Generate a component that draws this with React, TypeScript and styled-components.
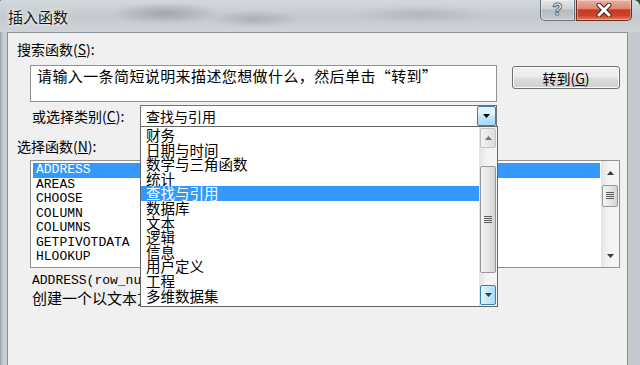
import React from "react";
import styled, { createGlobalStyle } from "styled-components";

const Global = createGlobalStyle`
  html, body { margin: 0; padding: 0; background: #24503c; }
  body {
    width: 640px; height: 365px; overflow: hidden;
    font-family: "Noto Sans CJK SC", "Liberation Sans", sans-serif;
    color: #000;
  }
  #root { width: 640px; height: 365px; }
`;

const Window = styled.div`
  width: 640px;
  height: 365px;
  display: flex;
  flex-direction: column;
  border-top-right-radius: 7px;
  border-top-left-radius: 2px;
  overflow: hidden;
  background: linear-gradient(90deg, #9aa1a7 0px, #c7cdd2 3px, #c3c9ce 100%);
`;

const TitleBar = styled.div`
  height: 32px;
  display: flex;
  align-items: flex-start;
  padding: 0 8px 0 8px;
  background:
    radial-gradient(ellipse 55px 11px at 165px 13px, rgba(80, 86, 92, 0.32), transparent),
    radial-gradient(ellipse 45px 9px at 255px 19px, rgba(80, 86, 92, 0.22), transparent),
    radial-gradient(ellipse 70px 9px at 420px 14px, rgba(80, 86, 92, 0.18), transparent),
    linear-gradient(180deg, #d3d8dc 0%, #c3c9ce 55%, #d0d4d8 100%);
`;

const Title = styled.div`
  margin-top: 8px;
  font-size: 15px;
  line-height: 18px;
  color: #111;
  text-shadow: 0 0 6px rgba(255, 255, 255, 0.9), 0 0 3px rgba(255, 255, 255, 0.9);
`;

const CaptionButtons = styled.div`
  margin-left: auto;
  display: flex;
  gap: 1px;
`;

const CaptionButton = styled.div<{ $kind: "help" | "close" }>`
  height: 21px;
  width: ${(p) => (p.$kind === "help" ? 35 : 56)}px;
  box-sizing: border-box;
  display: flex;
  align-items: center;
  justify-content: center;
  border: 1px solid ${(p) => (p.$kind === "help" ? "rgba(70,78,86,0.75)" : "#6d2a1f")};
  border-top: none;
  border-radius: ${(p) => (p.$kind === "help" ? "0 0 0 5px" : "0 0 5px 0")};
  background: ${(p) =>
    p.$kind === "help"
      ? "linear-gradient(180deg, #e4e8eb 0%, #cdd3d8 45%, #b3bac0 50%, #c4cbd1 100%)"
      : "linear-gradient(180deg, #eab0a2 0%, #dc8a76 42%, #c63a22 50%, #cc442b 78%, #e08068 100%)"};
  box-shadow: inset 0 0 0 1px rgba(255, 255, 255, 0.35);
`;

const HelpGlyph = styled.span`
  font-family: "Liberation Sans", sans-serif;
  font-weight: bold;
  font-size: 16px;
  line-height: 16px;
  color: #fff;
  -webkit-text-stroke: 0.6px #3a4048;
  text-shadow: 0 0 2px rgba(40, 48, 56, 0.8);
`;

const Body = styled.div`
  flex: 1;
  display: flex;
  padding: 0 12px 0 7px;
`;

const Client = styled.div`
  flex: 1;
  display: flex;
  flex-direction: column;
  background: #f0f0f0;
  border: 1px solid #8a9096;
  border-bottom: none;
`;

const SectionLabel = styled.div<{ $top: number }>`
  margin: ${(p) => p.$top}px 0 0 9px;
  font-size: 14px;
  line-height: 17px;
`;

const SearchRow = styled.div`
  display: flex;
  align-items: flex-start;
  margin: 7px 0 0 22px;
`;

const SearchBox = styled.div`
  width: 467px;
  height: 37px;
  box-sizing: border-box;
  border: 1px solid #8d9299;
  background: #fff;
  padding: 1px 6px;
  font-size: 15px;
  line-height: 18px;
  letter-spacing: 0.4px;
`;

const GoButton = styled.div`
  margin: 1px 0 0 15px;
  width: 108px;
  height: 23px;
  box-sizing: border-box;
  border: 1px solid #707070;
  border-radius: 3px;
  background: linear-gradient(180deg, #f2f2f2 0%, #ebebeb 48%, #dddddd 52%, #cfcfcf 100%);
  box-shadow: inset 0 0 0 1px #fbfbfb;
  display: flex;
  align-items: center;
  justify-content: center;
  font-size: 14px;
`;

const CategoryRow = styled.div`
  display: flex;
  align-items: center;
  margin: 3px 0 0 24px;
`;

const CategoryLabel = styled.div`
  width: 108px;
  font-size: 14px;
  line-height: 22px;
`;

const Combo = styled.div`
  position: relative;
  width: 357px;
  height: 22px;
  box-sizing: border-box;
  border: 1px solid #6e747a;
  background: #fff;
  display: flex;
  align-items: stretch;
`;

const ComboText = styled.div`
  flex: 1;
  padding-left: 5px;
  font-size: 14px;
  line-height: 20px;
`;

const ComboArrow = styled.div`
  width: 19px;
  box-sizing: border-box;
  border: 1px solid #3c7fb1;
  border-radius: 2px;
  background: linear-gradient(180deg, #eaf6fd 0%, #d9f0fc 45%, #bee6fd 50%, #a7d9f5 100%);
  display: flex;
  align-items: center;
  justify-content: center;
`;

const Dropdown = styled.div`
  position: absolute;
  top: 100%;
  left: -1px;
  width: 358px;
  height: 181px;
  box-sizing: border-box;
  border: 1px solid #646464;
  background: #fff;
  display: flex;
  z-index: 10;
`;

const DropItems = styled.div`
  flex: 1;
  padding-top: 1px;
  display: flex;
  flex-direction: column;
`;

const DropItem = styled.div<{ $selected?: boolean }>`
  height: 14.6px;
  line-height: 14.6px;
  padding-left: 5px;
  font-size: 14.5px;
  white-space: nowrap;
  background: ${(p) => (p.$selected ? "#3399ff" : "transparent")};
  color: ${(p) => (p.$selected ? "#fff" : "#000")};
`;

const ScrollBar = styled.div<{ $width: number }>`
  width: ${(p) => p.$width}px;
  display: flex;
  flex-direction: column;
  background: linear-gradient(90deg, #e3e3e3 0%, #f3f3f3 40%, #f5f5f5 100%);
`;

const ScrollBtn = styled.div<{ $hover?: boolean; $flat?: boolean; $h: number }>`
  height: ${(p) => p.$h}px;
  margin: 1px;
  box-sizing: border-box;
  border: 1px solid ${(p) => (p.$hover ? "#3c7fb1" : p.$flat ? "transparent" : "#c3c3c3")};
  border-radius: 2px;
  background: ${(p) =>
    p.$hover
      ? "linear-gradient(90deg, #e3f4fc 0%, #c4e8fb 50%, #a9dcf7 100%)"
      : p.$flat
      ? "transparent"
      : "linear-gradient(90deg, #f3f3f3 0%, #e8e8e8 50%, #dcdcdc 100%)"};
  display: flex;
  align-items: center;
  justify-content: center;
`;

const Track = styled.div<{ $h?: number }>`
  ${(p) => (p.$h !== undefined ? `height: ${p.$h}px;` : "flex: 1;")}
`;

const Thumb = styled.div<{ $h: number }>`
  height: ${(p) => p.$h}px;
  margin: 0 1px;
  box-sizing: border-box;
  border: 1px solid #979797;
  border-radius: 2px;
  background: linear-gradient(90deg, #f4f4f4 0%, #e6e6e6 50%, #d4d4d4 100%);
  display: flex;
  align-items: center;
  justify-content: center;
`;

const FunctionList = styled.div`
  margin: 5px 0 0 22px;
  width: 590px;
  height: 108px;
  box-sizing: border-box;
  border: 1px solid #8d9299;
  background: #fff;
  display: flex;
`;

const FnItems = styled.div`
  flex: 1;
  padding: 2px 1px 0 2px;
  display: flex;
  flex-direction: column;
`;

const FnItem = styled.div<{ $selected?: boolean }>`
  height: 14.5px;
  line-height: 14.5px;
  padding-left: 3px;
  font-family: "Liberation Mono", monospace;
  font-size: 13px;
  background: ${(p) => (p.$selected ? "#3399ff" : "transparent")};
  color: ${(p) => (p.$selected ? "#fff" : "#000")};
`;

const Syntax = styled.div`
  margin: 4px 0 0 24px;
  font-family: "Liberation Mono", monospace;
  font-size: 13px;
  line-height: 17px;
  white-space: nowrap;
`;

const Description = styled.div`
  margin: 0 0 0 24px;
  font-size: 15px;
  line-height: 17px;
  white-space: nowrap;
`;

const Arrow = ({ up, color = "#3b3b3b" }: { up?: boolean; color?: string }) => (
  <svg width="7" height="4" viewBox="0 0 7 4">
    <path d={up ? "M0 4 L3.5 0 L7 4 Z" : "M0 0 L7 0 L3.5 4 Z"} fill={color} />
  </svg>
);

const Grip = () => (
  <svg width="8" height="8" viewBox="0 0 8 8">
    <path d="M0 0.5H8M0 2.5H8M0 4.5H8M0 6.5H8" stroke="#5b5b5b" strokeWidth="1" />
  </svg>
);

const CloseX = () => (
  <svg width="16" height="14" viewBox="0 0 16 14">
    <path d="M3 2 L13 12 M13 2 L3 12" stroke="#5a1a10" strokeWidth="5" strokeLinecap="round" />
    <path d="M3 2 L13 12 M13 2 L3 12" stroke="#fff" strokeWidth="3" strokeLinecap="round" />
  </svg>
);

const categories = [
  "财务",
  "日期与时间",
  "数学与三角函数",
  "统计",
  "查找与引用",
  "数据库",
  "文本",
  "逻辑",
  "信息",
  "用户定义",
  "工程",
  "多维数据集",
];

const functions = ["ADDRESS", "AREAS", "CHOOSE", "COLUMN", "COLUMNS", "GETPIVOTDATA", "HLOOKUP"];

export default function App() {
  return (
    <>
      <Global />
      <Window>
        <TitleBar>
          <Title>插入函数</Title>
          <CaptionButtons>
            <CaptionButton $kind="help">
              <HelpGlyph>?</HelpGlyph>
            </CaptionButton>
            <CaptionButton $kind="close">
              <CloseX />
            </CaptionButton>
          </CaptionButtons>
        </TitleBar>
        <Body>
          <Client>
            <SectionLabel $top={8}>
              搜索函数(<u>S</u>):
            </SectionLabel>
            <SearchRow>
              <SearchBox>请输入一条简短说明来描述您想做什么，然后单击“转到”</SearchBox>
              <GoButton>
                转到(<u>G</u>)
              </GoButton>
            </SearchRow>
            <CategoryRow>
              <CategoryLabel>
                或选择类别(<u>C</u>):
              </CategoryLabel>
              <Combo>
                <ComboText>查找与引用</ComboText>
                <ComboArrow>
                  <Arrow color="#000" />
                </ComboArrow>
                <Dropdown>
                  <DropItems>
                    {categories.map((c) => (
                      <DropItem key={c} $selected={c === "查找与引用"}>
                        {c}
                      </DropItem>
                    ))}
                  </DropItems>
                  <ScrollBar $width={18}>
                    <ScrollBtn $h={20}>
                      <Arrow up color="#777" />
                    </ScrollBtn>
                    <Track $h={17} />
                    <Thumb $h={107}>
                      <Grip />
                    </Thumb>
                    <Track />
                    <ScrollBtn $h={20} $hover>
                      <Arrow />
                    </ScrollBtn>
                  </ScrollBar>
                </Dropdown>
              </Combo>
            </CategoryRow>
            <SectionLabel $top={11}>
              选择函数(<u>N</u>):
            </SectionLabel>
            <FunctionList>
              <FnItems>
                {functions.map((f) => (
                  <FnItem key={f} $selected={f === "ADDRESS"}>
                    {f}
                  </FnItem>
                ))}
              </FnItems>
              <ScrollBar $width={18}>
                <ScrollBtn $h={22} $flat>
                  <Arrow up />
                </ScrollBtn>
                <Thumb $h={22}>
                  <Grip />
                </Thumb>
                <Track />
                <ScrollBtn $h={20} $flat>
                  <Arrow />
                </ScrollBtn>
              </ScrollBar>
            </FunctionList>
            <Syntax>ADDRESS(row_num,column_num,abs_num,a1,sheet_text)</Syntax>
            <Description>创建一个以文本方式对工作簿中某一单元格进行引用</Description>
          </Client>
        </Body>
      </Window>
    </>
  );
}
